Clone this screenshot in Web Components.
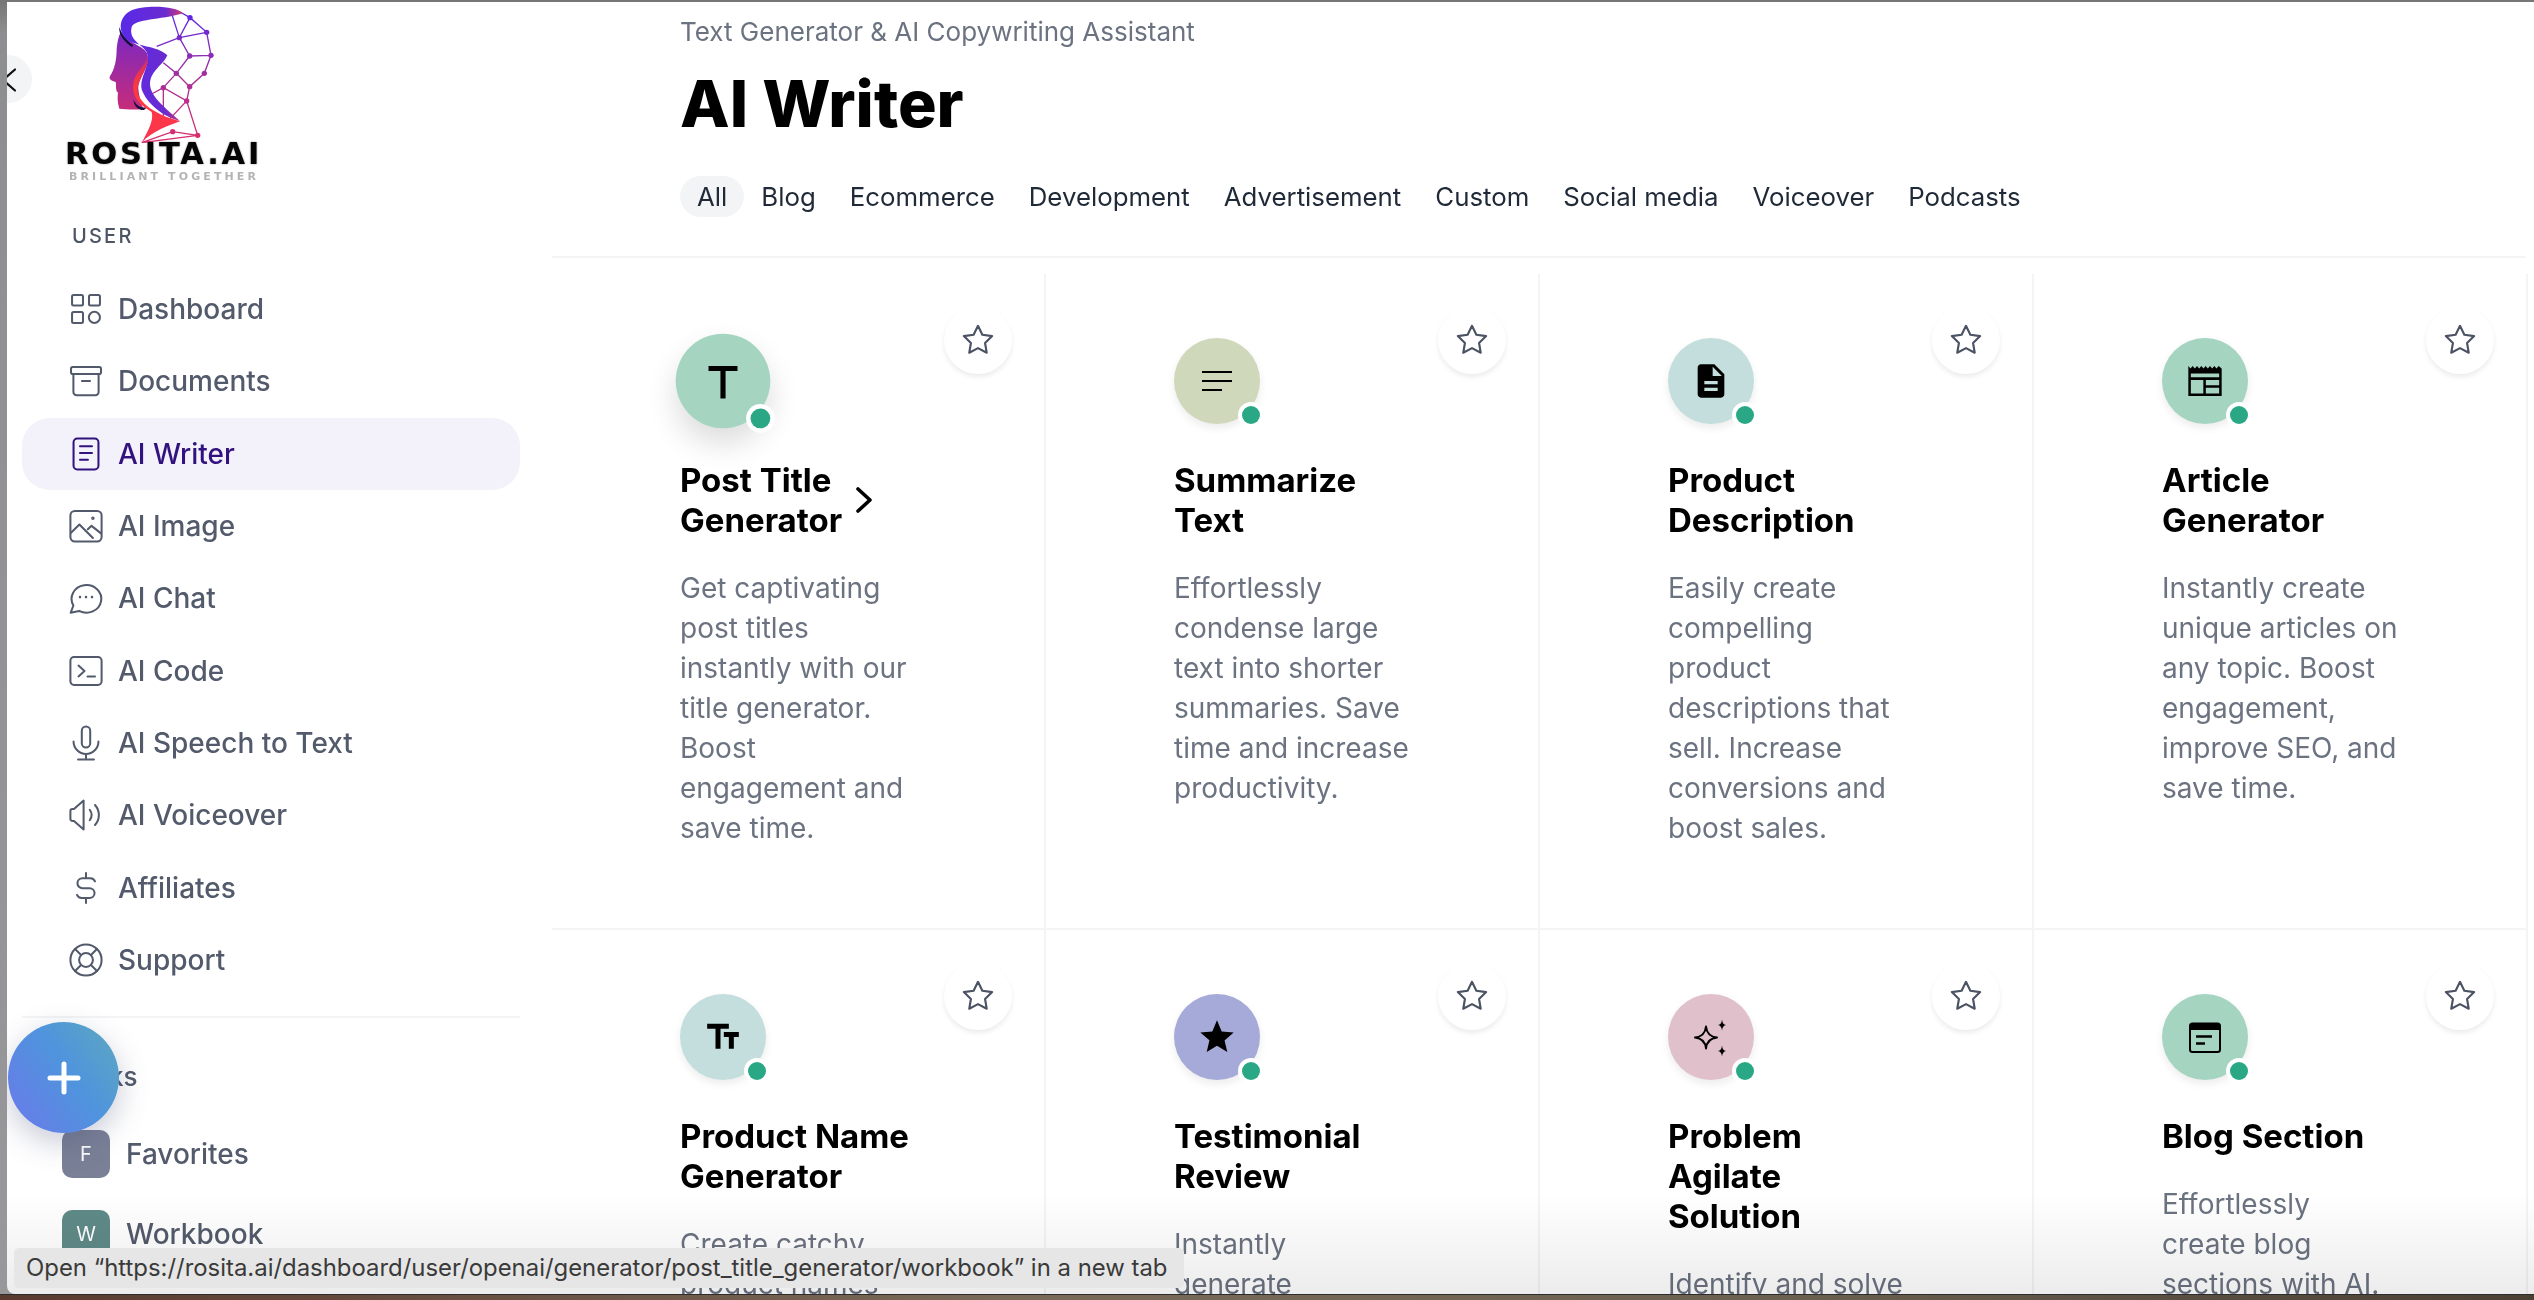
<!DOCTYPE html>
<html lang="en">
<head>
<meta charset="utf-8">
<title>AI Writer</title>
<style>
    html, body { margin: 0; height: 1300px; overflow: hidden; }
    body {
        background: linear-gradient(#767677 0, #8e8e90 34px, #98989a 100%);
        font-family: Inter, "Liberation Sans", sans-serif;
    }
    svg.ln { fill: none; stroke: currentColor; stroke-width: 1.35; stroke-linecap: round; stroke-linejoin: round; }
    svg.fl { fill: #000; }
</style>
</head>
<body>
<app-window>
    <side-nav slot="side">
        <nav-item label="Dashboard"><svg class="ln" viewBox="0 0 24 24"><rect x="2.7" y="2.7" width="7.3" height="7" rx="1"/><rect x="14" y="2.7" width="7.3" height="7" rx="1"/><rect x="2.7" y="14" width="7.3" height="7.3" rx="1"/><circle cx="17.6" cy="17.6" r="3.7"/></svg></nav-item>
        <nav-item label="Documents"><svg class="ln" viewBox="0 0 24 24"><rect x="2" y="2.7" width="20" height="4.6" rx="1.2"/><path d="M3.6 7.3v12a2.2 2.2 0 0 0 2.2 2.2h12.4a2.2 2.2 0 0 0 2.2-2.2v-12M9.3 12h5.4"/></svg></nav-item>
        <nav-item label="AI Writer" active><svg class="ln" viewBox="0 0 24 24"><rect x="3.7" y="1.7" width="16.6" height="20.6" rx="2.5"/><path d="M8 6.8h8M8 11.3h8M8 15.8h5.3"/></svg></nav-item>
        <nav-item label="AI Image"><svg class="ln" viewBox="0 0 24 24"><rect x="1.6" y="2" width="20.8" height="20.4" rx="3"/><path d="M2 16.5 7.6 11l9 9M13.2 14.2l2.5-2.3 6.3 5"/><circle cx="16.6" cy="6.8" r=".5"/></svg></nav-item>
        <nav-item label="AI Chat"><svg class="ln" viewBox="0 0 24 24"><path d="M1.8 21.8 3.6 17A9.9 9.2 0 1 1 7.4 20.6Z"/><path d="M8 11.4h.01M12 11.4h.01M16 11.4h.01" stroke-width="1.7"/></svg></nav-item>
        <nav-item label="AI Code"><svg class="ln" viewBox="0 0 24 24"><rect x="1.6" y="2.7" width="20.8" height="18.6" rx="2.4"/><path d="M7 8.4l4 3.6-4 3.6M13 15.6h5"/></svg></nav-item>
        <nav-item label="AI Speech to Text"><svg class="ln" viewBox="0 0 24 24"><rect x="9.2" y="1" width="5.6" height="14" rx="2.8"/><path d="M3.7 11a8.3 8.3 0 0 0 16.6 0M12 19.4V23M6.7 23h10.6"/></svg></nav-item>
        <nav-item label="AI Voiceover"><svg class="ln" viewBox="0 0 24 24"><path d="M10.4 2.4v19.2L4 16H3a1.4 1.4 0 0 1-1.4-1.4V9.400A1.400 1.400 0 0 1 3 8h1Z"/><path d="M14.500 8.500a6 6 0 0 1 0 7M18 5.300a10 10 0 0 1 0 13.400"/></svg></nav-item>
        <nav-item label="Affiliates"><svg class="ln" viewBox="0 0 24 24"><path d="M18 7.600A3.500 3.500 0 0 0 15 5.500H9.600a3.300 3.300 0 0 0 0 6.600h4.800a3.300 3.300 0 0 1 0 6.600H9A3.500 3.500 0 0 1 6 16.600M12 2v3.500M12 18.700V22"/></svg></nav-item>
        <nav-item label="Support"><svg class="ln" viewBox="0 0 24 24"><circle cx="12" cy="12" r="10.400"/><circle cx="12" cy="12" r="4.600"/><path d="M4.700 4.700l4 4M19.300 4.700l-4 4M4.700 19.300l4-4M19.300 19.300l-4-4"/></svg></nav-item>
    </side-nav>
    <main-panel slot="main">
        <page-header subtitle="Text Generator &amp; AI Copywriting Assistant" heading="AI Writer"></page-header>
        <tool-grid>
            <tool-card heading="Post Title Generator" tint="#a5d5c0" hovered>
                <svg slot="icon" class="fl" viewBox="0 0 24 24"><path d="M4.100 3.800v2.700h6.500v15h2.800v-15h6.500V3.800z"/></svg>
                Get captivating post titles instantly with our title generator. Boost engagement and save time.
            </tool-card>
            <tool-card heading="Summarize Text" tint="#cfd8bb">
                <svg slot="icon" class="fl" viewBox="0 0 24 24"><path d="M3 18h12v-1.200H3zM3 12.600h18v-1.200H3zM3 6v1.200h18V6z"/></svg>
                Effortlessly condense large text into shorter summaries. Save time and increase productivity.
            </tool-card>
            <tool-card heading="Product Description" tint="#c3dedd">
                <svg slot="icon" class="fl" viewBox="0 0 24 24"><path fill-rule="evenodd" d="M14 2H6c-1.100 0-2 .9-2 2v16c0 1.100.9 2 2 2h12c1.100 0 2-.9 2-2V8l-6-6zm2 16H8v-2h8v2zm0-4H8v-2h8v2zm-3-5V3.500L18.500 9H13z"/></svg>
                Easily create compelling product descriptions that sell. Increase conversions and boost sales.
            </tool-card>
            <tool-card heading="Article Generator" tint="#a5d5c0">
                <svg slot="icon" class="fl" viewBox="0 0 24 24"><path fill-rule="evenodd" d="M2 3l1.300 1.500L4.600 3l1.300 1.500L7.200 3l1.300 1.500L9.800 3l1.300 1.500L12.400 3l1.300 1.500L15 3l1.300 1.500L17.600 3l1.300 1.500L20.200 3l1.800 1.500V21H2ZM3.500 7.500v2.300h17V7.500Zm0 3.900v8.100h7.500v-8.100Zm9 0v3.200h8v-3.200Zm0 4.700v3.400h8v-3.400Z"/></svg>
                Instantly create unique articles on any topic. Boost engagement, improve SEO, and save time.
            </tool-card>
            <tool-card heading="Product Name Generator" tint="#c3dedd">
                <svg slot="icon" class="fl" viewBox="0 0 24 24"><path d="M2.500 4v3h5v12h3V7h5V4h-13zm19 5h-9v3h3v7h3v-7h3V9z"/></svg>
                Create catchy product names
            </tool-card>
            <tool-card heading="Testimonial Review" tint="#a5aad8">
                <svg slot="icon" class="fl" viewBox="0 0 24 24"><path d="M12 17.270 18.180 21l-1.640-6.970L22 9.240l-7.190-.61L12 2 9.190 8.630 2 9.240l5.460 4.730L5.820 21z"/></svg>
                Instantly generate
            </tool-card>
            <tool-card heading="Problem Agilate Solution" tint="#e0c0cb">
                <svg slot="icon" viewBox="0 0 40 40"><path d="M15 9.500Q16 19.500 26 20.500 16 21.500 15 31.500 14 21.500 4 20.500 14 19.500 15 9.500Z" fill="none" stroke="#000" stroke-width="2" stroke-linejoin="round"/><path d="M31 2.500Q31.500 7.500 35 8 31.500 8.500 31 13.500 30.500 8.500 27 8 30.500 7.500 31 2.500ZM31 28.500Q31.500 33.500 35 34 31.500 34.500 31 39.500 30.500 34.500 27 34 30.500 33.500 31 28.500Z"/></svg>
                Identify and solve
            </tool-card>
            <tool-card heading="Blog Section" tint="#a5d5c0">
                <svg slot="icon" viewBox="0 0 40 40"><rect x="5" y="6.500" width="30" height="28.500" rx="2.500" fill="none" stroke="#000" stroke-width="2"/><path d="M5 9a2.500 2.500 0 0 1 2.500-2.500h25A2.500 2.500 0 0 1 35 9v4H5z"/><path d="M11 19.500h16M11 26.500h9" stroke="#000" stroke-width="2.600"/></svg>
                Effortlessly create blog sections with AI.
            </tool-card>
        </tool-grid>
    </main-panel>
    <fab-button slot="over"></fab-button>
    <back-button slot="over"></back-button>
    <link-tooltip slot="over">Open “https://rosita.ai/dashboard/user/openai/generator/post_title_generator/workbook” in a new tab</link-tooltip>
</app-window>
<desktop-edge></desktop-edge>

<script>
class AppWindow extends HTMLElement {
    constructor() {
        super();
        this.attachShadow({ mode: "open" }).innerHTML = `
        <style>
            :host {
                display: flex;
                position: relative;
                margin: 2px 0 0 7px;
                height: 1292px;
                background: #fff;
                overflow: hidden;
                border-bottom-left-radius: 8px;
            }
            .fade {
                position: absolute;
                left: 0;
                right: 0;
                bottom: 0;
                height: 100px;
                background: linear-gradient(#fff, #ececed);
                mix-blend-mode: multiply;
            }
        </style>
        <slot name="side"></slot>
        <slot name="main"></slot>
        <div class="fade"></div>
        <slot name="over"></slot>`;
    }
}

class BrandLogo extends HTMLElement {
    constructor() {
        super();
        this.attachShadow({ mode: "open" }).innerHTML = `
        <style>
            :host { display: block; height: 188px; margin-left: -22px; }
            svg { display: block; width: 280px; height: 141px; }
            .name {
                margin-left: 65px;
                font: 700 30.500px/22px "DejaVu Sans", sans-serif;
                letter-spacing: 2.800px;
                color: #050505;
                text-shadow: 0 0 2px rgba(0,0,0,.45);
                white-space: nowrap;
            }
            .tag {
                margin: 7px 0 0 69px;
                font: 700 11px/9px "DejaVu Sans", sans-serif;
                letter-spacing: 3.100px;
                color: #b4b4b4;
                white-space: nowrap;
            }
        </style>
        <svg viewBox="0 0 840 423">
            <defs>
                <linearGradient id="net" gradientUnits="userSpaceOnUse" x1="0" y1="30" x2="0" y2="420">
                    <stop offset="0" stop-color="#5a28e6"/><stop offset=".5" stop-color="#a52f9c"/><stop offset="1" stop-color="#dc2f6c"/>
                </linearGradient>
                <linearGradient id="face" gradientUnits="userSpaceOnUse" x1="0" y1="90" x2="0" y2="325">
                    <stop offset="0" stop-color="#7a28c4"/><stop offset="1" stop-color="#c82c78"/>
                </linearGradient>
                <linearGradient id="band" gradientUnits="userSpaceOnUse" x1="370" y1="0" x2="550" y2="0">
                    <stop offset="0" stop-color="#5a2ae6"/><stop offset=".7" stop-color="#6a2bd0"/><stop offset="1" stop-color="#d8386c"/>
                </linearGradient>
                <linearGradient id="flame" gradientUnits="userSpaceOnUse" x1="0" y1="150" x2="0" y2="420">
                    <stop offset="0" stop-color="#c62c70"/><stop offset=".4" stop-color="#ff3a3c"/><stop offset="1" stop-color="#fb3550"/>
                </linearGradient>
            </defs>
            <g fill="none" stroke="url(#net)" stroke-width="4">
                <path d="M515 35 538 107 570 47 620 91 538 107 470 133M540 30 570 47M620 91 633 160 613 214 569 254 560 297 593 400 518 389 425 422 593 400M538 107 569 162 633 160M569 162 529 214 490 182M529 214 569 254M529 214 490 257 560 297 510 350M490 257V345M490 257 455 276"/>
            </g>
            <g fill="url(#net)">
                <circle cx="570" cy="47" r="8"/><circle cx="620" cy="91" r="8"/><circle cx="633" cy="160" r="8"/><circle cx="538" cy="107" r="8"/><circle cx="569" cy="162" r="8"/><circle cx="529" cy="214" r="8"/><circle cx="613" cy="214" r="8"/><circle cx="569" cy="254" r="8"/><circle cx="490" cy="257" r="8"/><circle cx="560" cy="297" r="8"/><circle cx="518" cy="389" r="8"/><circle cx="593" cy="400" r="8"/>
            </g>
            <path d="M362 90C385 125 430 130 442 155C452 195 415 225 415 260C418 290 425 305 430 320C405 325 380 322 358 320C352 300 352 285 354 272C345 265 350 250 347 240C335 236 325 232 330 222C345 200 350 170 350 140C352 120 355 105 362 90Z" fill="url(#face)"/>
            <path d="M358 75C355 100 375 120 395 135L400 130C378 115 365 95 358 75ZM400 293C410 312 425 320 442 315L432 324C415 325 402 312 400 293Z" fill="#16103f"/>
            <path d="M445 150C455 190 415 225 412 262C412 295 450 325 500 345L540 358C505 372 460 385 425 422C445 385 462 355 455 330C425 310 395 290 400 245C405 205 445 190 445 150Z" fill="url(#flame)"/>
            <path d="M548 34C530 10 430 8 392 26C358 44 352 85 380 112C410 135 470 130 502 160C490 190 452 205 450 245C450 285 500 320 540 357C490 345 440 305 425 262C418 220 455 190 440 150C425 125 385 115 395 75C405 50 480 55 548 34Z" fill="url(#band)"/>
        </svg>
        <div class="name">ROSITA.AI</div>
        <div class="tag">BRILLIANT TOGETHER</div>`;
    }
}

class NavItem extends HTMLElement {
    constructor() {
        super();
        this.attachShadow({ mode: "open" });
    }

    connectedCallback() {
        this.shadowRoot.innerHTML = `
        <style>
            :host {
                display: flex;
                align-items: center;
                gap: 14px;
                height: 72.300px;
                padding-left: 46px;
                font: 500 28px/40px Inter, sans-serif;
                color: #525a6b;
                border-radius: 28px;
            }
            :host([active]) { background: #f3f1f9; color: #31127f; }
            ::slotted(svg) { width: 36px; height: 36px; flex: none; }
        </style>
        <slot></slot>
        <span>${this.getAttribute("label")}</span>`;
    }
}

class SideNav extends HTMLElement {
    constructor() {
        super();
        this.attachShadow({ mode: "open" }).innerHTML = `
        <style>
            :host {
                display: block;
                flex: none;
                box-sizing: border-box;
                width: 545px;
                padding: 0 32px 0 15px;
            }
            .label {
                margin: 31px 0 22px 50px;
                font: 500 20px/30px Inter, sans-serif;
                letter-spacing: 2.200px;
                color: #4b5563;
            }
            .links {
                margin: 44px 0 38px 50px;
                font: 500 26px/30px Inter, sans-serif;
                color: #525a6b;
            }
            hr { border: 0; height: 2px; background: #f3f4f6; margin: 20px 0 0; }
        </style>
        <brand-logo></brand-logo>
        <div class="label">USER</div>
        <slot></slot>
        <hr>
        <div class="links">Links</div>
        <list-chip letter="F" tint="#7a8096">Favorites</list-chip>
        <list-chip letter="W" tint="#5f8a87">Workbook</list-chip>`;
    }
}

class ListChip extends HTMLElement {
    constructor() {
        super();
        this.attachShadow({ mode: "open" });
    }

    connectedCallback() {
        this.shadowRoot.innerHTML = `
        <style>
            :host {
                display: flex;
                align-items: center;
                gap: 16px;
                height: 48px;
                margin: 0 0 32px 40px;
                font: 500 28px/40px Inter, sans-serif;
                color: #525a6b;
            }
            b {
                display: grid;
                place-items: center;
                width: 48px;
                height: 48px;
                border-radius: 10px;
                background: ${this.getAttribute("tint")};
                color: #fff;
                font: 400 20px Inter, sans-serif;
            }
        </style>
        <b>${this.getAttribute("letter")}</b>
        <slot></slot>`;
    }
}

class MainPanel extends HTMLElement {
    constructor() {
        super();
        this.attachShadow({ mode: "open" }).innerHTML = `
        <style>
            :host { display: block; flex: 1; min-width: 0; }
        </style>
        <slot></slot>`;
    }
}

class PageHeader extends HTMLElement {
    constructor() {
        super();
        this.attachShadow({ mode: "open" });
    }

    connectedCallback() {
        const tabs = ["All", "Blog", "Ecommerce", "Development", "Advertisement", "Custom", "Social media", "Voiceover", "Podcasts"];
        this.shadowRoot.innerHTML = `
        <style>
            :host {
                display: block;
                box-sizing: border-box;
                height: 256px;
                margin-right: 8px;
                padding: 11.500px 0 0 128px;
                border-bottom: 2px solid #f3f4f6;
            }
            p { margin: 0; font: 400 26px/36px Inter, sans-serif; color: #6b7280; }
            h1 { margin: 14.500px 0 0; font: 800 64.500px/80px Inter, sans-serif; color: #000; }
            nav { display: flex; margin-top: 32px; }
            a {
                padding: 0 17px;
                font: 400 25.800px/41px Inter, sans-serif;
                color: #1f2937;
                border-radius: 21px;
            }
            a:first-child { background: #f3f4f6; }
        </style>
        <p>${this.getAttribute("subtitle").replace("&", "&amp;")}</p>
        <h1>${this.getAttribute("heading")}</h1>
        <nav>${tabs.map((t) => `<a>${t}</a>`).join("")}</nav>`;
    }
}

class ToolGrid extends HTMLElement {
    constructor() {
        super();
        this.attachShadow({ mode: "open" }).innerHTML = `
        <style>
            :host {
                display: grid;
                grid-template-columns: repeat(4, 494px);
                margin-top: 16px;
            }
        </style>
        <slot></slot>`;
    }
}

class ToolCard extends HTMLElement {
    constructor() {
        super();
        this.attachShadow({ mode: "open" });
    }

    connectedCallback() {
        this.shadowRoot.innerHTML = `
        <style>
            :host {
                display: block;
                position: relative;
                box-sizing: border-box;
                height: 656px;
                padding: 64px 0 0 128px;
                border-right: 2px solid #f3f4f6;
                border-bottom: 2px solid #f3f4f6;
            }
            .avatar {
                position: relative;
                display: grid;
                place-items: center;
                width: 86px;
                height: 86px;
                border-radius: 50%;
                background: ${this.getAttribute("tint")};
                box-shadow: 0 4px 8px rgba(0,0,0,.08);
            }
            :host([hovered]) .avatar {
                transform: scale(1.1);
                box-shadow: 0 14px 28px rgba(0,0,0,.14);
            }
            ::slotted(svg) { width: 40px; height: 40px; }
            .dot {
                position: absolute;
                right: 0;
                bottom: 0;
                box-sizing: content-box;
                width: 18px;
                height: 18px;
                border-radius: 50%;
                background: #2aa885;
                box-shadow: 0 0 0 4px #fff;
            }
            .title { display: flex; align-items: center; gap: 5px; margin-top: 36px; }
            h3 { margin: 0; max-width: 240px; font: 700 33px/40px Inter, sans-serif; color: #000; }
            :host([hovered]) h3 { max-width: 168px; }
            .title svg { display: none; width: 22px; height: 26px; flex: none; }
            :host([hovered]) .title svg { display: block; }
            p {
                margin: 28px 0 0;
                width: 236px;
                font: 400 28px/40px Inter, sans-serif;
                color: #6b7280;
            }
            .star {
                position: absolute;
                top: 32px;
                right: 32px;
                display: grid;
                place-items: center;
                width: 68px;
                height: 68px;
                border-radius: 50%;
                background: #fff;
                box-shadow: 0 3px 5px rgba(0,0,0,.08);
            }
            .star svg { width: 34px; height: 34px; fill: none; stroke: #4b5263; stroke-width: 1.500; stroke-linejoin: round; }
        </style>
        <div class="avatar"><slot name="icon"></slot><span class="dot"></span></div>
        <div class="title">
            <h3>${this.getAttribute("heading")}</h3>
            <svg viewBox="0 0 22 26"><path d="M5 2l12 11L5 24" fill="none" stroke="#000" stroke-width="3.600" stroke-linecap="round" stroke-linejoin="round"/></svg>
        </div>
        <p><slot></slot></p>
        <div class="star"><svg viewBox="0 0 24 24"><path d="M12 17.750l-6.172 3.245 1.179-6.873-5-4.867 6.900-1 3.086-6.253 3.086 6.253 6.900 1-5 4.867 1.179 6.873z"/></svg></div>`;
    }
}

class FabButton extends HTMLElement {
    constructor() {
        super();
        this.attachShadow({ mode: "open" }).innerHTML = `
        <style>
            :host {
                position: absolute;
                left: 1px;
                top: 1020px;
                display: grid;
                place-items: center;
                width: 111px;
                height: 111px;
                border-radius: 50%;
                background: linear-gradient(55deg, #6c78ea, #4f94dd 55%, #5ea8bf);
                box-shadow: 0 10px 30px rgba(60,70,110,.28);
            }
            svg { width: 34px; height: 34px; stroke: #fff; stroke-width: 5px; stroke-linecap: round; }
        </style>
        <svg viewBox="0 0 34 34"><path d="M17 3v28M3 17h28"/></svg>`;
    }
}

class BackButton extends HTMLElement {
    constructor() {
        super();
        this.attachShadow({ mode: "open" }).innerHTML = `
        <style>
            :host {
                position: absolute;
                left: -23px;
                top: 53px;
                display: block;
                width: 48px;
                height: 48px;
                border-radius: 50%;
                background: #f3f4f6;
            }
            svg { position: absolute; left: 18px; top: 13px; width: 14px; height: 24px; fill: none; stroke: #111; stroke-width: 2.200px; stroke-linecap: round; stroke-linejoin: round; }
        </style>
        <svg viewBox="0 0 14 24"><path d="M13 1.500 1 12l12 10.500"/></svg>`;
    }
}

class LinkTooltip extends HTMLElement {
    constructor() {
        super();
        this.attachShadow({ mode: "open" }).innerHTML = `
        <style>
            :host {
                position: absolute;
                left: 7px;
                top: 1246px;
                box-sizing: border-box;
                width: 1170px;
                height: 40px;
                padding-left: 12px;
                background: #e6e6e6;
                border-radius: 5px;
                font: 400 23.900px/40px Inter, sans-serif;
                color: #3a3a3a;
                white-space: nowrap;
            }
        </style>
        <slot></slot>`;
    }
}

class DesktopEdge extends HTMLElement {
    constructor() {
        super();
        this.attachShadow({ mode: "open" }).innerHTML = `
        <style>
            :host {
                display: block;
                height: 5px;
                border-top: 1px solid #2c2c2e;
                background: linear-gradient(90deg, #5a3a2e, #7a6a58 40%, #6b6150 70%, #4a4034);
            }
        </style>`;
    }
}

customElements.define("app-window", AppWindow);
customElements.define("brand-logo", BrandLogo);
customElements.define("nav-item", NavItem);
customElements.define("side-nav", SideNav);
customElements.define("list-chip", ListChip);
customElements.define("main-panel", MainPanel);
customElements.define("page-header", PageHeader);
customElements.define("tool-grid", ToolGrid);
customElements.define("tool-card", ToolCard);
customElements.define("fab-button", FabButton);
customElements.define("back-button", BackButton);
customElements.define("link-tooltip", LinkTooltip);
customElements.define("desktop-edge", DesktopEdge);
</script>
</body>
</html>
